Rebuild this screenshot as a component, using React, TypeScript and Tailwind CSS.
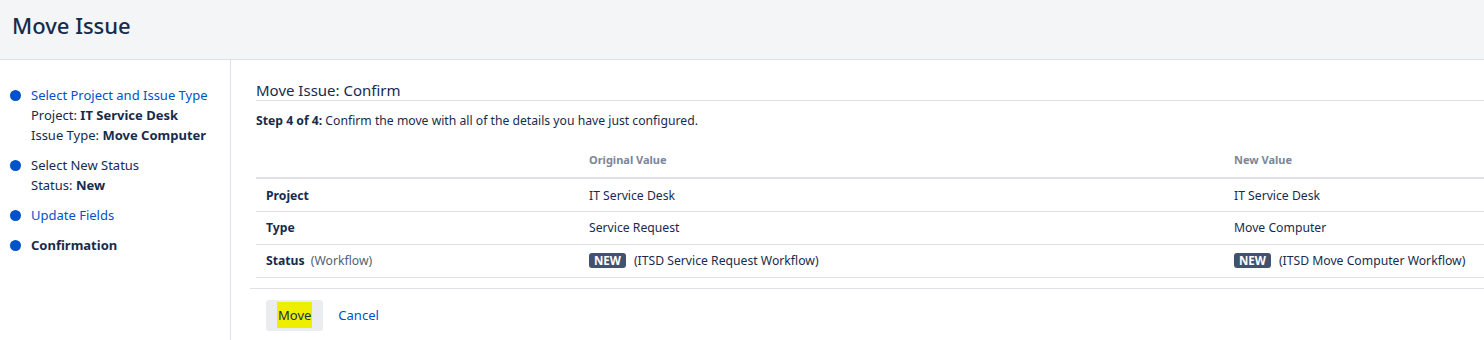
const STEPS = [
  { title: 'Select Project and Issue Type', link: true, details: [['Project', 'IT Service Desk'], ['Issue Type', 'Move Computer']] },
  { title: 'Select New Status', link: false, details: [['Status', 'New']] },
  { title: 'Update Fields', link: true, details: [] },
  { title: 'Confirmation', current: true, details: [] },
]

function Lozenge({ children }: { children: string }) {
  return (
    <span className="inline-block bg-[#42526e] text-white text-[11.5px] font-bold leading-[15px] px-[5px] rounded-[3px] uppercase mr-[8px]">
      {children}
    </span>
  )
}

export default function App() {
  return (
    <div className="w-[1484px] h-[340px] overflow-hidden bg-white text-[#172b4d] font-['Noto_Sans',sans-serif]">
      {/* Header */}
      <header className="h-[60px] bg-[#f4f5f7] border-b border-[#dfe1e6] flex items-center px-[12px]">
        <h1 className="text-[22px] font-medium text-[#172b4d] leading-none -mt-[10px]">Move Issue</h1>
      </header>

      <div className="flex h-[280px]">
        {/* Sidebar */}
        <nav className="w-[231px] shrink-0 border-r border-[#dfe1e6] pt-[25px] pl-[10px] text-[13px] leading-[20px]">
          <ul className="space-y-[10px]">
            {STEPS.map(s => (
              <li key={s.title} className="flex gap-[10px]">
                <span className="w-[11px] h-[11px] rounded-full bg-[#0052cc] mt-[5px] shrink-0" />
                <div>
                  <div className={s.current ? 'font-bold' : s.link ? 'text-[#0052cc]' : 'text-[#172b4d]'}>{s.title}</div>
                  {s.details.map(([k, v]) => (
                    <div key={k}>
                      {k}: <b className="font-bold">{v}</b>
                    </div>
                  ))}
                </div>
              </li>
            ))}
          </ul>
        </nav>

        {/* Main */}
        <main className="flex-1 pl-[25px] pt-[20px]">
          <h2 className="text-[15px] leading-[20px] pb-0 border-b border-[#dfe1e6]">Move Issue: Confirm</h2>
          <p className="text-[12.2px] leading-[16px] mt-[12px]">
            <b className="font-bold">Step 4 of 4:</b> Confirm the move with all of the details you have just configured.
          </p>

          <table className="w-full mt-[17px] text-[12.2px] border-collapse">
            <thead>
              <tr className="border-b-2 border-[#dfe1e6] text-[#7a869a] text-[11px] text-left">
                <th className="w-[333px] h-[32px]" />
                <th className="w-[645px] font-bold pb-[2px]">Original Value</th>
                <th className="font-bold pb-[2px]">New Value</th>
              </tr>
            </thead>
            <tbody>
              <tr className="border-b border-[#dfe1e6] h-[33px]">
                <td className="pl-[10px] font-bold pt-[2px]">Project</td>
                <td className="pt-[2px]">IT Service Desk</td>
                <td className="pt-[2px]">IT Service Desk</td>
              </tr>
              <tr className="border-b border-[#dfe1e6] h-[33px]">
                <td className="pl-[10px] font-bold pt-[2px]">Type</td>
                <td className="pt-[2px]">Service Request</td>
                <td className="pt-[2px]">Move Computer</td>
              </tr>
              <tr className="border-b border-[#dfe1e6] h-[33px]">
                <td className="pl-[10px] pt-[2px]">
                  <b className="font-bold">Status</b> <span className="text-[#505f79] ml-[3px]">(Workflow)</span>
                </td>
                <td className="pt-[2px]">
                  <Lozenge>New</Lozenge>(ITSD Service Request Workflow)
                </td>
                <td className="pt-[2px]">
                  <Lozenge>New</Lozenge>(ITSD Move Computer Workflow)
                </td>
              </tr>
            </tbody>
          </table>

          <div className="mt-[10px] -ml-[6px] border-t border-[#dfe1e6] pt-[11px] pl-[16px] flex items-center gap-[15px] text-[13px]">
            <button className="h-[31px] px-[11px] rounded-[3px] bg-[#ebecf0] text-[#172b4d] pt-[1px]">
              <span className="bg-[#eeee00] px-[1px] py-[4px]">Move</span>
            </button>
            <a className="text-[#0052cc] pt-[1px]">Cancel</a>
          </div>
        </main>
      </div>
    </div>
  )
}
